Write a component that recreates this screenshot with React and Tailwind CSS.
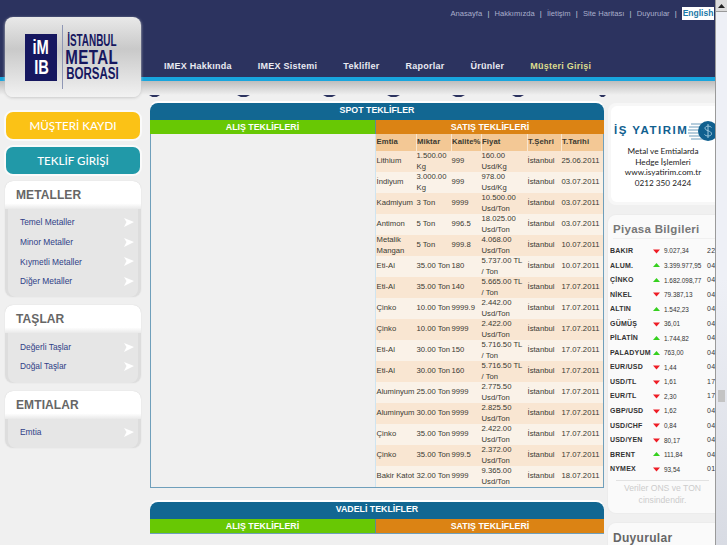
import React from 'react';

const sans = "font-['Liberation_Sans',Arial,sans-serif]";

const navItems = ['IMEX Hakkında', 'IMEX Sistemi', 'Teklifler', 'Raporlar', 'Ürünler'];
const topLinks = ['Anasayfa', 'Hakkımızda', 'İletişim', 'Site Haritası', 'Duyurular'];

const offers = [
    ['Lithium', '1.500.00 Kg', '999', '160.00 Usd/Kg', '25.06.2011'],
    ['İndiyum', '3.000.00 Kg', '999', '978.00 Usd/Kg', '03.07.2011'],
    ['Kadmiyum', '3 Ton', '9999', '10.500.00 Usd/Ton', '03.07.2011'],
    ['Antimon', '5 Ton', '996.5', '18.025.00 Usd/Ton', '03.07.2011'],
    ['Metalik Mangan', '5 Ton', '999.8', '4.068.00 Usd/Ton', '10.07.2011'],
    ['Eti-Al', '35.00 Ton', '180', '5.737.00 TL / Ton', '10.07.2011'],
    ['Eti-Al', '35.00 Ton', '140', '5.665.00 TL / Ton', '17.07.2011'],
    ['Çinko', '10.00 Ton', '9999.9', '2.442.00 Usd/Ton', '17.07.2011'],
    ['Çinko', '10.00 Ton', '9999', '2.422.00 Usd/Ton', '17.07.2011'],
    ['Eti-Al', '30.00 Ton', '150', '5.716.50 TL / Ton', '17.07.2011'],
    ['Eti-Al', '30.00 Ton', '160', '5.716.50 TL / Ton', '17.07.2011'],
    ['Aluminyum', '25.00 Ton', '9999', '2.775.50 Usd/Ton', '17.07.2011'],
    ['Aluminyum', '30.00 Ton', '9999', '2.825.50 Usd/Ton', '17.07.2011'],
    ['Çinko', '35.00 Ton', '9999', '2.422.00 Usd/Ton', '17.07.2011'],
    ['Çinko', '35.00 Ton', '999.5', '2.372.00 Usd/Ton', '17.07.2011'],
    ['Bakir Katot', '32.00 Ton', '9999', '9.365.00 Usd/Ton', '18.07.2011'],
];

const market = [
    ['BAKIR', 'down', '9.027,34', '22'],
    ['ALUM.', 'up', '3.399.977,95', '04'],
    ['ÇİNKO', 'up', '1.682.098,77', '04'],
    ['NİKEL', 'down', '79.387,13', '04'],
    ['ALTIN', 'up', '1.542,23', '04'],
    ['GÜMÜŞ', 'down', '36,01', '04'],
    ['PİLATİN', 'up', '1.744,82', '04'],
    ['PALADYUM', 'up', '763,00', '04'],
    ['EUR/USD', 'down', '1,44', '04'],
    ['USD/TL', 'down', '1,61', '17'],
    ['EUR/TL', 'down', '2,30', '17'],
    ['GBP/USD', 'down', '1,62', '04'],
    ['USD/CHF', 'down', '0,84', '04'],
    ['USD/YEN', 'down', '80,17', '04'],
    ['BRENT', 'up', '111,84', '04'],
    ['NYMEX', 'down', '93,54', '01'],
];

const menus = [
    { title: 'METALLER', items: ['Temel Metaller', 'Minor Metaller', 'Kıymetli Metaller', 'Diğer Metaller'] },
    { title: 'TAŞLAR', items: ['Değerli Taşlar', 'Doğal Taşlar'] },
    { title: 'EMTIALAR', items: ['Emtia'] },
];

const SideMenu = ({ title, items }) => (
    <div className="w-[136px] ml-[5px] rounded-[8px] overflow-hidden bg-[#dddddd] shadow-[0_0_0_1px_#ececec]">
        <div className="h-[28px] bg-gradient-to-b from-white from-80% to-[#e9e9e9] rounded-t-[8px] pl-[11px] pt-[7px]">
            <span className={`${sans} block text-[12px] leading-[15px] font-bold text-[#666666] tracking-[0.1px]`}>{title}</span>
        </div>
        <div className="mx-[3px] rounded-b-[8px] bg-[#e6e6e6] pt-[4px] pb-[6px]">
            {items.map((item) => (
                <div key={item} className="h-[19.6px] flex items-center justify-between pl-[12px] pr-[4px]">
                    <span className={`${sans} text-[8.4px] text-[#2f3f86]`}>{item}</span>
                    <svg width="10" height="9" viewBox="0 0 10 9"><path d="M0 0 L10 4 L0 9 L2.5 4 Z" fill="#ffffff" /></svg>
                </div>
            ))}
        </div>
    </div>
);

const Arrow = ({ dir }) => (
    <svg width="7" height="5" viewBox="0 0 7 5" className="shrink-0">
        {dir === 'up'
            ? <path d="M3.5 0 L7 4 L0 4 Z" fill="#35d01e" />
            : <path d="M0 0.5 L7 0.5 L3.5 4.5 Z" fill="#ee1c25" />}
    </svg>
);

const OfferBars = ({ title }) => (
    <>
        <div className={`${sans} h-[17px] bg-[#126792] rounded-t-[8px] text-center text-white text-[8.8px] leading-[15px] font-bold shadow-[0_-2px_0_#ffffff]`}>{title}</div>
        <div className={`${sans} flex h-[14px] text-white text-[8.8px] leading-[14px] font-bold text-center`}>
            <div className="w-[225px] bg-[#68c804]">ALIŞ TEKLİFLERİ</div>
            <div className="w-[1px] bg-[#5a8f8f]" />
            <div className="flex-1 bg-[#db8314]">SATIŞ TEKLİFLERİ</div>
        </div>
    </>
);

const NavNotch = ({ className }) => (
    <div className={`h-[2px] bg-[#2c335f] [clip-path:polygon(0_0,100%_0,70%_100%,30%_100%)] ${className}`} />
);

const App = () => {
    return (
        <div className={`${sans} relative flex h-[545px] w-[727px] overflow-hidden bg-[#f0f0f0]`}>
            <div className="w-[715px] shrink-0 overflow-hidden">
                {/* Header */}
                <header className="h-[77px] bg-[#2c335f] flex flex-col">
                    <div className="flex items-center justify-end h-[13px] mt-[7px] pr-[1px] gap-[5.2px] text-[7.6px] text-[#a9aecb]">
                        {topLinks.map((link) => (
                            <React.Fragment key={link}>
                                <span>{link}</span>
                                <span className="text-[#c5c8dc]">|</span>
                            </React.Fragment>
                        ))}
                        <span className="bg-white text-[#1d79a8] font-bold h-[13px] w-[32px] text-center leading-[13px] text-[8.5px]">English</span>
                    </div>
                    <nav className="flex gap-[26px] pl-[164px] mt-[40px] text-[9px] font-bold tracking-[0.25px] text-[#e9eaf2]">
                        {navItems.map((item) => <span key={item}>{item}</span>)}
                        <span className="text-[#dcdc8e]">Müşteri Girişi</span>
                    </nav>
                </header>
                <div className="h-[4px] bg-[#18a5dd]" />
                <div className="h-[14px] bg-gradient-to-b from-[#bdbdbd] to-[#f0f0f0]" />

                {/* Small nav arrows */}
                <div className="flex h-[2px] pl-[149px] bg-[#f0f0f0]">
                    <NavNotch className="w-[11px]" />
                    <NavNotch className="ml-[77px] w-[13px]" />
                    <NavNotch className="ml-[73px] w-[13px]" />
                    <NavNotch className="ml-[51px] w-[13px]" />
                    <NavNotch className="ml-[52px] w-[13px]" />
                    <NavNotch className="ml-[47px] w-[12px]" />
                    <NavNotch className="ml-[75px] w-[7px]" />
                </div>

                <div className="flex items-start">
                    {/* Left column */}
                    <aside className="w-[150px] shrink-0 pt-[15px] flex flex-col">
                        <div className="ml-[6px] w-[134px] h-[27px] rounded-[7px] bg-[#fbc216] shadow-[0_0_0_2px_#fafafa] text-center text-white text-[11.6px] leading-[27px] font-['Lato',sans-serif] font-medium">MÜŞTERİ KAYDI</div>
                        <div className="ml-[6px] mt-[8px] w-[134px] h-[27px] rounded-[7px] bg-[#2199a8] shadow-[0_0_0_2px_#fafafa] text-center text-white text-[11.6px] leading-[27px] font-['Lato',sans-serif] font-medium">TEKLİF GİRİŞİ</div>
                        <div className="mt-[7px] flex flex-col gap-[8px]">
                            {menus.map((menu) => <SideMenu key={menu.title} {...menu} />)}
                        </div>
                    </aside>

                    {/* Center column */}
                    <main className="w-[454px] shrink-0 pt-[6px]">
                        <OfferBars title="SPOT TEKLİFLER" />
                        <div className="flex border border-t-0 border-[#6f9fbb] h-[354px] bg-[#f0f0f0]">
                            <div className="w-[225px] shrink-0 border-r border-[#cfe4f0]" />
                            <table className="w-[227px] table-fixed border-collapse text-[7.7px] leading-[10.5px] text-[#3a3a32] h-fit">
                                <colgroup>
                                    <col className="w-[40px]" />
                                    <col className="w-[35px]" />
                                    <col className="w-[30px]" />
                                    <col className="w-[46px]" />
                                    <col className="w-[34px]" />
                                    <col />
                                </colgroup>
                                <thead>
                                    <tr className="h-[17px] bg-[#f3c895] font-bold text-left">
                                        {['Emtia', 'Miktar', 'Kalite%', 'Fiyat', 'T.Şehri', 'T.Tarihi'].map((h) => (
                                            <th key={h} className="pl-[0.5px] border-r border-[#f8e6d0] last:border-r-0 font-bold tracking-[0.1px]">{h}</th>
                                        ))}
                                    </tr>
                                </thead>
                                <tbody>
                                    {offers.map((row, i) => (
                                        <tr key={i} className="h-[21px] odd:bg-[#f9e6d2] even:bg-[#faf2e8]">
                                            <td className="pl-[0.5px] align-middle">{row[0]}</td>
                                            <td className="pl-[0.5px] align-middle">{row[1]}</td>
                                            <td className="pl-[0.5px] align-middle">{row[2]}</td>
                                            <td className="pl-[0.5px] pr-[3px] align-middle">{row[3]}</td>
                                            <td className="pl-[0.5px] align-middle">İstanbul</td>
                                            <td className="pl-[0.5px] align-middle">{row[4]}</td>
                                        </tr>
                                    ))}
                                </tbody>
                            </table>
                        </div>
                        <div className="mt-[14px] border-b border-[#6f9fbb]">
                            <OfferBars title="VADELİ TEKLİFLER" />
                        </div>
                    </main>

                    {/* Right column */}
                    <aside className="w-[111px] shrink-0 pl-[4px] pt-[6px] flex flex-col gap-[10px]">
                        <div className="h-[102px] rounded-l-[8px] bg-[#f7f7f7] pl-[3px] py-[3px]">
                            <div className="h-[96px] bg-white rounded-l-[6px] flex flex-col pt-[14px] overflow-hidden">
                                <div className="flex items-center h-[22px] pl-[3px]">
                                    <span className="text-[11.5px] font-bold text-[#10608f] tracking-[1.5px] whitespace-nowrap">İŞ YATIRIM</span>
                                    <svg width="32" height="22" viewBox="0 0 32 22" className="-ml-[1px] shrink-0">
                                        <path d="M4 4 H20 M2 7 H20 M1 10 H20 M1 13 H20 M2 16 H20 M4 19 H20" stroke="#9dbdd2" strokeWidth="1.4" />
                                        <circle cx="21" cy="11" r="10" fill="#10608f" />
                                        <path d="M24.5 7.5 C23 5.5 18 5.7 18 8.2 C18 11 24.5 10.5 24.5 13.8 C24.5 16.5 19 16.6 17.5 14.5 M21 4 V18" stroke="#9fc9df" strokeWidth="1" fill="none" />
                                    </svg>
                                </div>
                                <div className="mt-[4px] text-center text-[8.2px] leading-[10.5px] text-[#222222] font-['Lato',sans-serif]">
                                    Metal ve Emtialarda<br />Hedge İşlemleri<br />www.isyatirim.com.tr<br />0212 350 2424
                                </div>
                            </div>
                        </div>

                        <div className="h-[298px] rounded-l-[8px] bg-[#fafafa] shadow-[0_0_0_1px_#ececec] pl-[2px]">
                            <div className="h-[24px] ml-[3px] pt-[7px] text-[11.5px] leading-[14px] font-bold text-[#777777] tracking-[0.3px] border-b border-[#f0f0f0]">Piyasa Bilgileri</div>
                            <div className="mt-[5px] text-[7px] text-[#333333]">
                                {market.map(([name, dir, value, date]) => (
                                    <div key={name} className="h-[14.55px] flex items-center overflow-hidden">
                                        <span className="w-[43px] shrink-0 font-bold tracking-[0.2px]">{name}</span>
                                        <Arrow dir={dir} />
                                        <span className="w-[47px] shrink-0 pl-[4px] text-[6.4px]">{value}</span>
                                        <span className="tracking-[0.3px]">{date}</span>
                                    </div>
                                ))}
                            </div>
                            <div className="mt-[3px] mx-[6px] border-t border-[#e2e2e2] pt-[1px] text-center text-[8.6px] leading-[12px] text-[#cccccc]">
                                Veriler ONS ve TON<br />cinsindendir.
                            </div>
                        </div>

                        <div className="h-[30px] rounded-tl-[8px] bg-[#fafafa] shadow-[0_0_0_1px_#ececec] pl-[5px] pt-[8px] text-[12px] leading-[14px] font-bold text-[#666666] tracking-[0.3px]">Duyurular</div>
                    </aside>
                </div>
            </div>

            {/* Scrollbar */}
            <div className="flex-1 flex flex-col border-l border-[#9a9a9a]">
                <div className="h-[12px] bg-[#dcdcdc] border-b border-[#999999] flex items-center justify-center">
                    <svg width="7" height="4" viewBox="0 0 7 4"><path d="M3.5 0 L7 4 L0 4 Z" fill="#222222" /></svg>
                </div>
                <div className="flex-1 flex justify-center pt-[378px] bg-gradient-to-b from-[#eef0f6] from-50% to-[#d8dbe3]">
                    <div className="h-[12px] w-[7px] bg-[radial-gradient(#c4c4c4_1px,transparent_1px)] bg-[length:2px_2px]" />
                </div>
            </div>

            {/* Logo card, overlaps the header */}
            <div className="absolute left-[5px] top-[17px] w-[136px] h-[80px] rounded-[8px] bg-gradient-to-b from-[#e9e9e9] via-[#c9c9c9] via-40% to-[#f2f2f2] flex items-center shadow-[0_1px_3px_#c9c9c9]">
                <div className="ml-[20px] w-[32px] h-[47px] bg-[#16175f] flex flex-col items-center justify-center text-white font-bold leading-[20px]">
                    <span className="text-[21px] scale-x-[0.7] whitespace-nowrap">iM</span>
                    <span className="text-[21px] scale-x-[0.7] whitespace-nowrap">IB</span>
                </div>
                <div className="ml-[5px] w-[1px] h-[64px] bg-[#8f97b5]" />
                <div className="w-[58px] flex flex-col text-[#16175f] font-bold items-center">
                    <span className="text-[16px] leading-[14px] scale-x-[0.62] whitespace-nowrap">İSTANBUL</span>
                    <span className="text-[21px] leading-[18px] tracking-[0.5px] scale-x-[0.72] whitespace-nowrap">METAL</span>
                    <span className="text-[16px] leading-[15px] scale-x-[0.72] whitespace-nowrap">BORSASI</span>
                </div>
            </div>
        </div>
    );
};

export default App;
